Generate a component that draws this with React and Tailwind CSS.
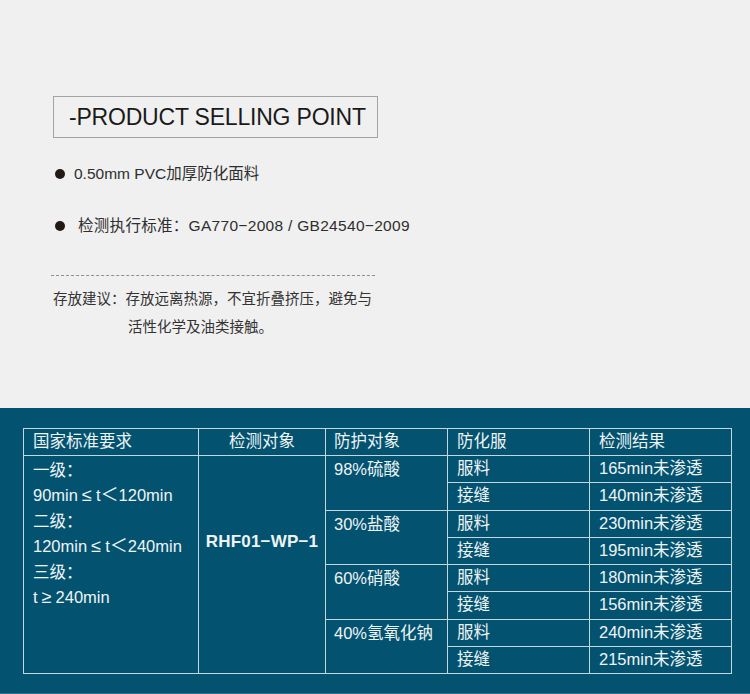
export default function App() {
  const font = { fontFamily: '"Liberation Sans", "Noto Sans CJK SC", sans-serif' };

  const rows = [
    { chem: '98%硫酸', items: [['服料', '165min未渗透'], ['接缝', '140min未渗透']] },
    { chem: '30%盐酸', items: [['服料', '230min未渗透'], ['接缝', '195min未渗透']] },
    { chem: '60%硝酸', items: [['服料', '180min未渗透'], ['接缝', '156min未渗透']] },
    { chem: '40%氢氧化钠', items: [['服料', '240min未渗透'], ['接缝', '215min未渗透']] },
  ];

  const td = 'border border-[#c3d7df] align-top p-0';
  const op = 'inline-block w-[18px] text-center text-[18px]';

  return (
    <div className="w-[750px] h-[694px] bg-[#f0f0f0] flex flex-col" style={font}>
      {/* top: selling points */}
      <div className="h-[408px] flex flex-col pt-[96px] pl-[51px] text-[#2e2e2e]">
        <div className="ml-[2px] w-[325px] h-[42px] border border-[#a3a3a3] flex items-center pl-[15px] text-[23px] text-[#1a1a1a] tracking-[-0.2px]">
          -PRODUCT SELLING POINT
        </div>

        <div className="mt-[26px] ml-[4px] flex items-center h-[20px] text-[15.5px]">
          <span className="w-[10px] h-[10px] rounded-full bg-[#231815]" />
          <span className="ml-[9px]">0.50mm&nbsp;PVC加厚防化面料</span>
        </div>
        <div className="mt-[32px] ml-[4px] flex items-center h-[20px] text-[15.5px]">
          <span className="w-[10px] h-[10px] rounded-full bg-[#231815]" />
          <span className="ml-[13px] tracking-[0.3px]">检测执行标准：GA770−2008 / GB24540−2009</span>
        </div>

        <div className="mt-[39px] w-[324px] border-t border-dashed border-[#8f8f8f]" />

        <div className="mt-[9px] ml-[2px] text-[14.5px] leading-[28px] text-[#333]">
          <div>存放建议：存放远离热源，不宜折叠挤压，避免与</div>
          <div className="pl-[75px]">活性化学及油类接触。</div>
        </div>
      </div>

      {/* bottom: test table */}
      <div className="flex-1 bg-[#03526f] border-b border-[#2f6f89] pt-[20px] px-[23px] text-[#eef4f6] text-[16.5px]">
        <table className="table-fixed border-collapse w-[708px]">
          <colgroup>
            <col className="w-[175px]" />
            <col className="w-[127px]" />
            <col className="w-[122px]" />
            <col className="w-[142px]" />
            <col className="w-[142px]" />
          </colgroup>
          <thead>
            <tr className="h-[27px]">
              <th className={`${td} align-middle font-normal text-left pl-[9px]`}>国家标准要求</th>
              <th className={`${td} align-middle font-normal text-center`}>检测对象</th>
              <th className={`${td} align-middle font-normal text-left pl-[8px]`}>防护对象</th>
              <th className={`${td} align-middle font-normal text-left pl-[9px]`}>防化服</th>
              <th className={`${td} align-middle font-normal text-left pl-[9px]`}>检测结果</th>
            </tr>
          </thead>
          <tbody>
            {rows.map((r, i) =>
              r.items.map((it, j) => (
                <tr key={`${i}-${j}`} className="h-[27.25px]">
                  {i === 0 && j === 0 && (
                    <td rowSpan={8} className={`${td} pl-[9px] pt-[2px] leading-[25.4px]`}>
                      <div>一级：</div>
                      <div>90min<span className={op}>≤</span>t<span className={op}>＜</span>120min</div>
                      <div>二级：</div>
                      <div>120min<span className={op}>≤</span>t<span className={op}>＜</span>240min</div>
                      <div>三级：</div>
                      <div>t<span className={op}>≥</span>240min</div>
                    </td>
                  )}
                  {i === 0 && j === 0 && (
                    <td rowSpan={8} className={`${td} text-center pt-[73px]`}>
                      <span className="font-bold text-[17px] leading-[22px] tracking-[0.2px]">RHF01−WP−1</span>
                    </td>
                  )}
                  {j === 0 && (
                    <td rowSpan={2} className={`${td} pl-[8px] leading-[27px]`}>
                      {r.chem}
                    </td>
                  )}
                  <td className={`${td} align-middle pl-[9px]`}>{it[0]}</td>
                  <td className={`${td} align-middle pl-[9px]`}>{it[1]}</td>
                </tr>
              ))
            )}
          </tbody>
        </table>
      </div>
    </div>
  );
}
